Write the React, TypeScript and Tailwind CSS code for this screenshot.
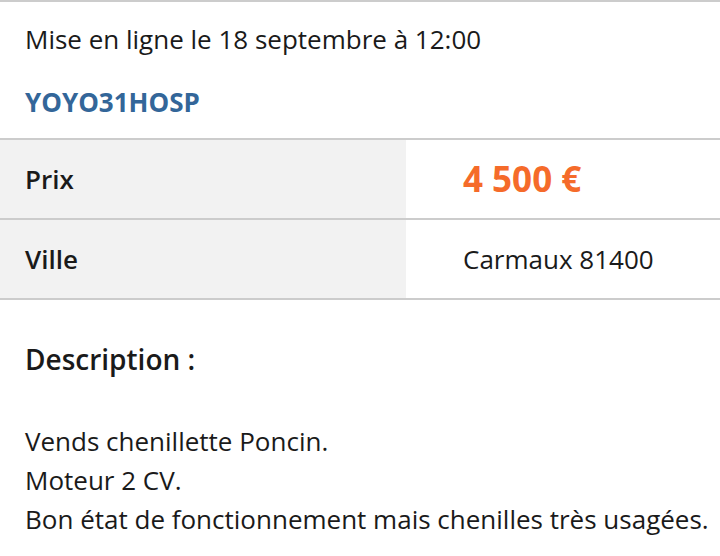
const rows = [
  { label: "Prix", value: "4 500 €", price: true },
  { label: "Ville", value: "Carmaux 81400", price: false },
];

const lines = [
  "Vends chenillette Poncin.",
  "Moteur 2 CV.",
  "Bon état de fonctionnement mais chenilles très usagées.",
];

export default function App() {
  return (
    <div className="w-[720px] h-[556px] overflow-hidden bg-white text-[#1a1a1a] font-['Open_Sans',sans-serif]">
      <div className="border-t-2 border-[#cccccc] px-[25px] pt-[19px] h-[138px]">
        <p className="text-[26px] leading-[36px]">Mise en ligne le 18 septembre à 12:00</p>
        <p className="mt-[27px] text-[26px] leading-[36px] font-bold text-[#336699]">YOYO31HOSP</p>
      </div>

      <div className="border-t-2 border-[#cccccc]">
        {rows.map((r) => (
          <div key={r.label} className="flex h-[80px] border-b-2 border-[#cccccc]">
            <div className="w-[406px] bg-[#f2f2f2] px-[25px] flex items-center text-[26px] font-semibold">
              {r.label}
            </div>
            <div className="flex-1 pl-[57px] flex items-center">
              {r.price ? (
                <span className="text-[35px] font-bold text-[#f56b2a]">{r.value}</span>
              ) : (
                <span className="text-[26px]">{r.value}</span>
              )}
            </div>
          </div>
        ))}
      </div>

      <div className="pl-[25px] pt-[41px]">
        <h2 className="text-[28px] leading-[36px] font-semibold">Description :</h2>
        <div className="mt-[45px] text-[26px] leading-[39px] whitespace-nowrap">
          {lines.map((l) => (
            <p key={l}>{l}</p>
          ))}
        </div>
      </div>
    </div>
  );
}
